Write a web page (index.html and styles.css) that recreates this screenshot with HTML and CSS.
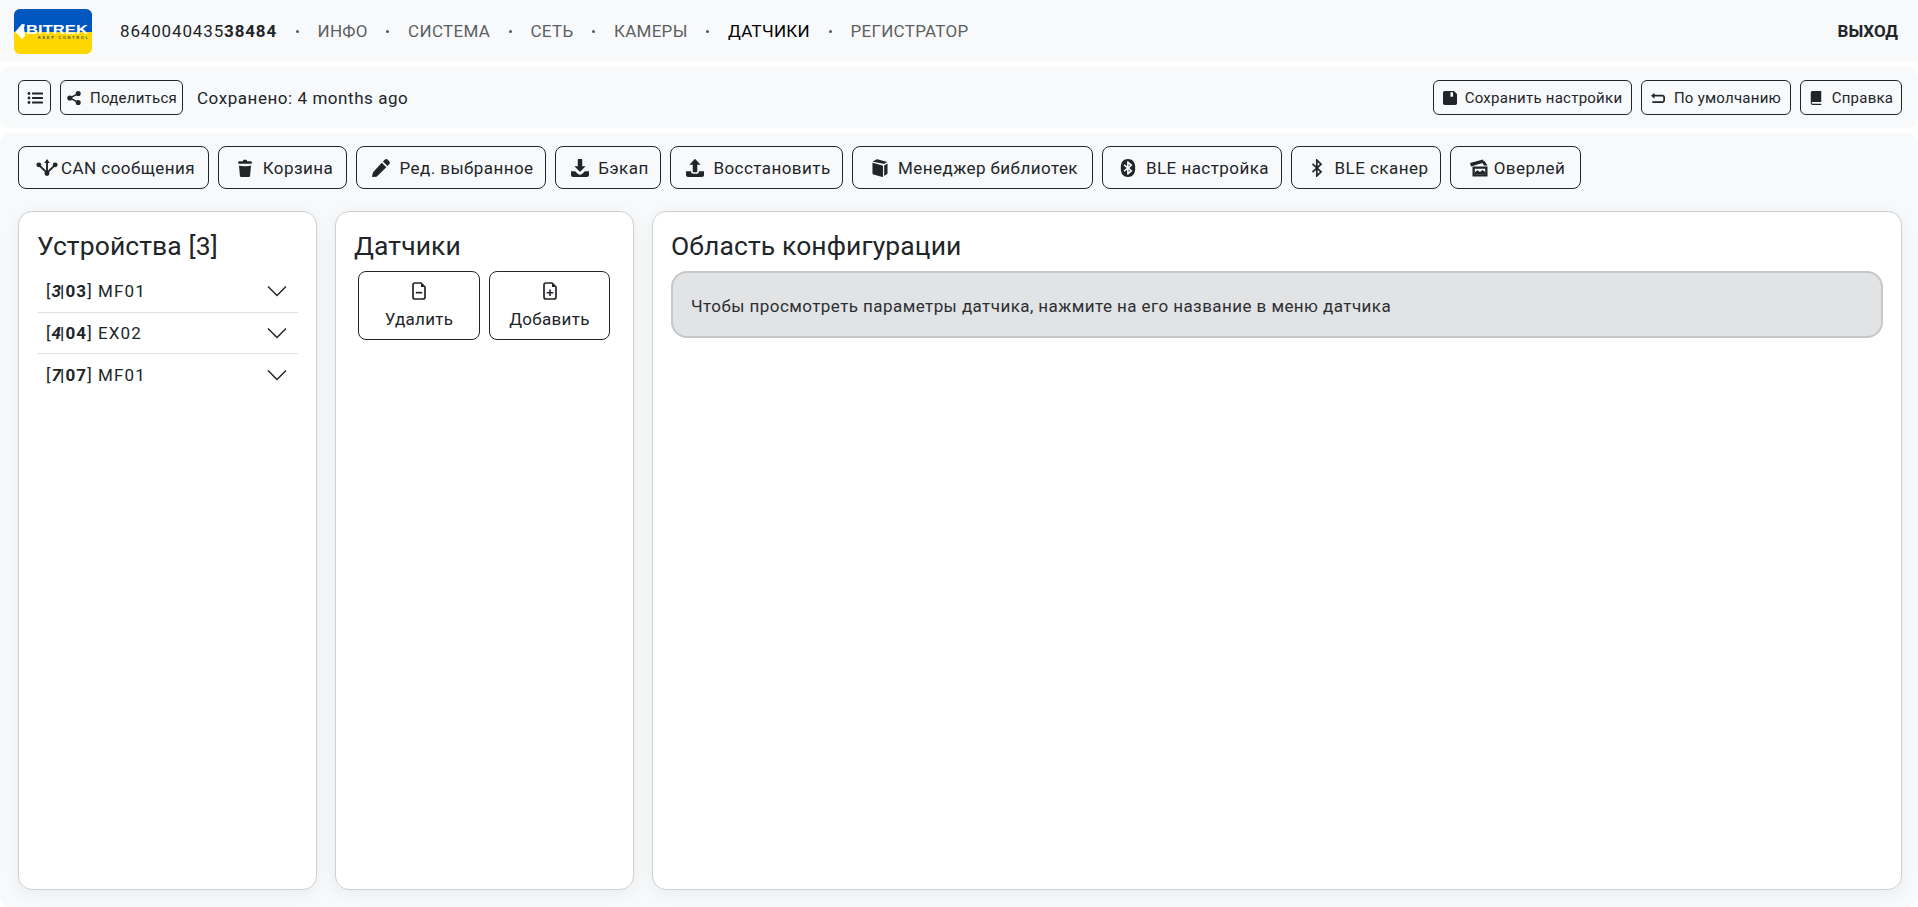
FILE: index.html
```html
<!DOCTYPE html>
<html lang="en">
<head>
  <meta charset="UTF-8">
  <meta name="viewport" content="width=device-width, initial-scale=1.0">
  <title>Датчики</title>
  <link rel="stylesheet" href="styles.css">
</head>
<body>
  <svg class="sprite" xmlns="http://www.w3.org/2000/svg">
    <symbol id="i-list" viewBox="0 0 16 16">
      <circle cx="2" cy="3.500" r="1.400"/><circle cx="2" cy="8" r="1.400"/><circle cx="2" cy="12.500" r="1.400"/>
      <rect x="5" y="2.500" width="11" height="2" rx=".6"/><rect x="5" y="7" width="11" height="2" rx=".6"/><rect x="5" y="11.500" width="11" height="2" rx=".6"/>
    </symbol>
    <symbol id="i-share" viewBox="0 0 16 16">
      <circle cx="12.800" cy="2.900" r="2.900"/><circle cx="3.200" cy="8" r="2.900"/><circle cx="12.800" cy="13.100" r="2.900"/>
      <path d="M12.800 2.900 3.200 8l9.600 5.100" fill="none" stroke="currentColor" stroke-width="1.700"/>
    </symbol>
    <symbol id="i-fork" viewBox="0 0 20 16">
      <circle cx="10" cy="13.700" r="2.300"/><circle cx="2.300" cy="5.500" r="2.300"/><circle cx="17.700" cy="5.500" r="2.300"/>
      <path d="M10 0 7.400 3.800h5.200z"/>
      <path d="M10 3v11M2.300 5.500l7.700 7.500 7.700-7.500" fill="none" stroke="currentColor" stroke-width="1.800"/>
    </symbol>
    <symbol id="i-trash" viewBox="0 0 16 18">
      <path d="M2.200 2.300h3.600L6.500.8h3l.7 1.500h3.600c.6 0 1 .5 1 1v1c0 .3-.2.5-.5.5H1.700c-.3 0-.5-.2-.5-.5v-1c0-.5.400-1 1-1z"/>
      <path d="M2 6.600c2 1 10 1 12 0l-.9 9.800c-.1.9-.8 1.600-1.700 1.600H4.600c-.9 0-1.600-.7-1.700-1.600z"/>
    </symbol>
    <symbol id="i-pencil" viewBox="0 0 16 16">
      <path d="M11.300.7c.8-.8 2-.8 2.800 0l1.200 1.200c.8.8.8 2 0 2.800l-1.600 1.600-4-4zM8.700 3.300l4 4-7.900 7.900c-.3.300-.6.500-1 .6L.6 16c-.4 0-.7-.3-.6-.7l.9-3.300c.1-.4.300-.7.6-1z"/>
    </symbol>
    <symbol id="i-download" viewBox="0 0 16 16">
      <path d="M6.700 0h2.600c.4 0 .7.300.7.700v5.800h3L8.400 11.200c-.2.200-.6.200-.8 0L3 6.500h3V.7c0-.4.300-.7.700-.7z"/>
      <path d="M0 10.800h3.600l2.400 2.400c1.100 1.100 2.900 1.100 4 0l2.400-2.400H16v3.400c0 1-.8 1.800-1.800 1.800H1.800C.8 16 0 15.200 0 14.200z"/>
    </symbol>
    <symbol id="i-upload" viewBox="0 0 16 16">
      <path d="M7.600.2c.2-.2.600-.2.800 0L13 5h-3v6c0 .4-.3.7-.7.700H6.700C6.300 11.700 6 11.400 6 11V5H3z"/>
      <path d="M0 10.800h4.500v.6c0 1 .8 1.800 1.800 1.800h3.400c1 0 1.800-.8 1.800-1.800v-.6H16v3.400c0 1-.8 1.800-1.800 1.800H1.800C.8 16 0 15.200 0 14.200z"/>
    </symbol>
    <symbol id="i-book3d" viewBox="0 0 16 16">
      <path d="M1.500 2.200 4.800.4c.3-.2.600-.2.900-.1l8.800 2.300-2.600 1.600c-.3.200-.6.200-.9.100L2 2.500c-.2 0-.4-.2-.5-.3z"/>
      <path d="M1.300 3.300l8.900 2.500c.3.100.5.300.5.600v9.100c0 .3-.3.500-.6.400l-8-2.200c-.5-.1-.8-.5-.8-1z"/>
      <path d="M11.700 5.700l3-1.800v8.700c0 .3-.1.500-.4.700l-2.600 1.700z"/>
    </symbol>
    <symbol id="i-bt-fill" viewBox="0 0 16 20">
      <path fill-rule="evenodd" d="M8 0c5 0 8 3 8 10s-3 10-8 10-8-3-8-10S3 0 8 0zM7 2.500v5.600L4.300 5.700 3 7l3.500 3L3 13l1.300 1.300L7 11.900v5.600h1l5-4.300L9.500 10 13 6.800 8 2.500zm1.700 3.200 1.700 1.200-1.700 1.500zm0 5.900 1.700 1.500-1.700 1.200z"/>
    </symbol>
    <symbol id="i-bt" viewBox="0 0 12 20">
      <path d="M1 5.500 10.500 14.300 5.800 18.800V1.200L10.500 5.700 1 14.500" fill="none" stroke="currentColor" stroke-width="1.900"/>
    </symbol>
    <symbol id="i-overlay" viewBox="0 0 18 17">
      <path d="M0 3.500 13 0l1 3L1 7z"/>
      <path fill-rule="evenodd" d="M2.500 7h15v10h-15zM4.800 9.300v5.400h10.400V9.300z"/>
      <path d="M4.800 14.700v-2l2.700-2 2.500 1.800 2.500-2 2.700 2v2.200z"/>
      <path d="M14.500 1.500l3 4.500h-3.500l-2-3z"/>
    </symbol>
    <symbol id="i-save" viewBox="0 0 16 16">
      <path fill-rule="evenodd" d="M2 0h10.500L16 3.500V14c0 1.100-.9 2-2 2H2c-1.100 0-2-.9-2-2V2C0 .9.900 0 2 0zM8.500 1.500v5h3v-5z"/>
    </symbol>
    <symbol id="i-back" viewBox="0 0 16 12">
      <path d="M0 3.500 4 0v2.300h9c1.700 0 3 1.300 3 3v3.400c0 1.700-1.300 3-3 3H1.500V9.700H13c.6 0 1-.4 1-1V5.300c0-.6-.4-1-1-1H4v2.500z"/>
    </symbol>
    <symbol id="i-book" viewBox="0 0 12 16">
      <path d="M2 0h10v12.500H2.200c-.7 0-1.200.4-1.200 1s.5 1 1.200 1H12V16H2c-1.100 0-2-1-2-2.200V2C0 .9.900 0 2 0z"/>
    </symbol>
    <symbol id="i-file-minus" viewBox="0 0 14 18">
      <path d="M3 1h6l4 4v10c0 1.100-.9 2-2 2H3c-1.100 0-2-.9-2-2V3c0-1.100.9-2 2-2z" fill="none" stroke="currentColor" stroke-width="1.700"/>
      <path d="M9 1v4h4z"/>
      <rect x="3.800" y="9.800" width="6.400" height="1.700"/>
    </symbol>
    <symbol id="i-file-plus" viewBox="0 0 14 18">
      <path d="M3 1h6l4 4v10c0 1.100-.9 2-2 2H3c-1.100 0-2-.9-2-2V3c0-1.100.9-2 2-2z" fill="none" stroke="currentColor" stroke-width="1.700"/>
      <path d="M9 1v4h4z"/>
      <path d="M6.200 7.500h1.600v2.500h2.500v1.600H7.800v2.500H6.200v-2.500H3.700V10h2.500z"/>
    </symbol>
    <symbol id="i-chevron" viewBox="0 0 20 12">
      <path d="M1 1.500 10 10.500 19 1.500" fill="none" stroke="currentColor" stroke-width="1.500"/>
    </symbol>
  </svg>

  <header class="navbar">
    <svg class="logo" viewBox="0 0 78 45" xmlns="http://www.w3.org/2000/svg">
      <rect width="78" height="45" rx="6" fill="#ffd600"/>
      <path d="M0 23V6a6 6 0 0 1 6-6h66a6 6 0 0 1 6 6v17z" fill="#0057c0"/>
      <path d="M1 23 8 15l3 .5-1 3 1 8-3 4-3-4z" fill="#fff"/>
      <text x="12" y="25" class="logo-name" textLength="62" lengthAdjust="spacingAndGlyphs">BITREK</text>
      <text x="24" y="29.500" class="logo-tag" textLength="50" lengthAdjust="spacing">KEEP CONTROL</text>
    </svg>
    <nav class="nav-links">
      <span class="imei">8640040435<b>38484</b></span>
      <span class="dot"></span><a class="nav-link">ИНФО</a>
      <span class="dot"></span><a class="nav-link">СИСТЕМА</a>
      <span class="dot"></span><a class="nav-link">СЕТЬ</a>
      <span class="dot"></span><a class="nav-link">КАМЕРЫ</a>
      <span class="dot"></span><a class="nav-link active">ДАТЧИКИ</a>
      <span class="dot"></span><a class="nav-link">РЕГИСТРАТОР</a>
    </nav>
    <a class="logout">ВЫХОД</a>
  </header>

  <div class="toolbar">
    <button class="btn btn-sm btn-menu"><svg class="icon"><use href="#i-list"/></svg></button>
    <button class="btn btn-sm btn-share"><svg class="icon"><use href="#i-share"/></svg>Поделиться</button>
    <span class="saved">Сохранено: 4 months ago</span>
    <div class="toolbar-right">
      <button class="btn btn-sm btn-save"><svg class="icon"><use href="#i-save"/></svg>Сохранить настройки</button>
      <button class="btn btn-sm btn-default"><svg class="icon"><use href="#i-back"/></svg>По умолчанию</button>
      <button class="btn btn-sm btn-help"><svg class="icon"><use href="#i-book"/></svg>Справка</button>
    </div>
  </div>

  <main class="workspace">
    <div class="actions">
      <button class="btn btn-lg b-can"><svg class="icon icon-fork"><use href="#i-fork"/></svg>CAN сообщения</button>
      <button class="btn btn-lg b-trash"><svg class="icon"><use href="#i-trash"/></svg>Корзина</button>
      <button class="btn btn-lg b-edit"><svg class="icon"><use href="#i-pencil"/></svg>Ред. выбранное</button>
      <button class="btn btn-lg b-backup"><svg class="icon"><use href="#i-download"/></svg>Бэкап</button>
      <button class="btn btn-lg b-restore"><svg class="icon"><use href="#i-upload"/></svg>Восстановить</button>
      <button class="btn btn-lg b-lib"><svg class="icon"><use href="#i-book3d"/></svg>Менеджер библиотек</button>
      <button class="btn btn-lg b-ble"><svg class="icon"><use href="#i-bt-fill"/></svg>BLE настройка</button>
      <button class="btn btn-lg b-scan"><svg class="icon"><use href="#i-bt"/></svg>BLE сканер</button>
      <button class="btn btn-lg b-over"><svg class="icon"><use href="#i-overlay"/></svg>Оверлей</button>
    </div>

    <div class="panels">
      <section class="card card-side">
        <h4>Устройства [3]</h4>
        <div class="device"><span>[<b><i>3</i>|03</b>] MF01</span><svg class="chevron"><use href="#i-chevron"/></svg></div>
        <div class="device"><span>[<b><i>4</i>|04</b>] EX02</span><svg class="chevron"><use href="#i-chevron"/></svg></div>
        <div class="device"><span>[<b><i>7</i>|07</b>] MF01</span><svg class="chevron"><use href="#i-chevron"/></svg></div>
      </section>
      <section class="card card-side">
        <h4>Датчики</h4>
        <div class="sensor-btns">
          <button class="btn btn-stack"><svg class="icon"><use href="#i-file-minus"/></svg>Удалить</button>
          <button class="btn btn-stack"><svg class="icon"><use href="#i-file-plus"/></svg>Добавить</button>
        </div>
      </section>
      <section class="card card-main">
        <h4>Область конфигурации</h4>
        <div class="alert">Чтобы просмотреть параметры датчика, нажмите на его название в меню датчика</div>
      </section>
    </div>
  </main>
</body>
</html>
```

FILE: styles.css
```css
* {
  box-sizing: border-box;
}

html, body {
  height: 100%;
}

body {
  margin: 0;
  display: flex;
  flex-direction: column;
  gap: 5px;
  overflow: hidden;
  background-color: #fff;
  color: #212529;
  font-family: Roboto, "Noto Sans", sans-serif;
  font-size: 17px;
}

.sprite {
  position: absolute;
  width: 0;
  height: 0;
}

.icon {
  width: 18px;
  height: 18px;
  fill: currentColor;
  flex: none;
}

/* top bar */
.navbar {
  display: flex;
  align-items: center;
  height: 62px;
  padding: 0 20px 0 14px;
  background-color: #f8f9fa;
  flex: none;
}

.logo {
  width: 78px;
  height: 45px;
  margin-right: 28px;
  flex: none;
}

.logo-name {
  font-family: "Liberation Sans", sans-serif;
  font-size: 13px;
  font-weight: 700;
  fill: #fff;
}

.logo-tag {
  font-family: "Liberation Sans", sans-serif;
  font-size: 4px;
  font-weight: 700;
  fill: #4a5a40;
}

.nav-links {
  display: flex;
  align-items: center;
  gap: 18.700px;
  letter-spacing: .3px;
}

.imei {
  color: #212529;
  letter-spacing: .85px;
}

.nav-link {
  color: #5c5f62;
}

.nav-link.active {
  color: #000;
}

.dot {
  width: 3px;
  height: 3px;
  border-radius: 50%;
  background-color: #555;
}

.logout {
  margin-left: auto;
  font-weight: 700;
}

/* second bar */
.toolbar {
  display: flex;
  align-items: center;
  gap: 9px;
  height: 61px;
  padding: 0 16px 0 18px;
  border-radius: 10px;
  background-color: #f8f9fa;
  flex: none;
}

.saved {
  margin-left: 5px;
  letter-spacing: .55px;
}

.toolbar-right {
  display: flex;
  gap: 9px;
  margin-left: auto;
}

.btn {
  display: inline-flex;
  align-items: center;
  justify-content: center;
  border: 1px solid #212529;
  background: transparent;
  color: #212529;
  font-family: inherit;
  white-space: nowrap;
  padding: 0;
}

.btn-sm {
  height: 35px;
  gap: 9px;
  border-radius: 6px;
  font-size: 15px;
  letter-spacing: .25px;
}

.btn-sm .icon {
  width: 14px;
  height: 14px;
}

.btn-menu { width: 33px; }
.btn-menu .icon { width: 16px; height: 16px; }
.btn-share { width: 123px; gap: 9px; padding-left: 1px; }
.btn-save { width: 199px; gap: 8px; }
.btn-default { width: 150px; }
.btn-help { width: 102px; }

.btn-lg {
  height: 43px;
  gap: 9px;
  padding-left: 4px;
  border-radius: 8px;
  font-size: 17px;
  letter-spacing: .45px;
}

.b-can { width: 191px; gap: 3px; }
.b-trash { width: 129px; }
.b-edit { width: 190px; }
.b-backup { width: 106px; }
.b-restore { width: 173px; }
.b-lib { width: 241px; }
.b-ble { width: 180px; }
.b-scan { width: 150px; }
.b-over { width: 131px; gap: 6px; }
.icon-fork { width: 22px; height: 17px; }

/* main area */
.workspace {
  flex: 1;
  display: flex;
  flex-direction: column;
  min-height: 0;
  padding: 13px 16px 17px 18px;
  border-radius: 10px;
  background-color: #f8f9fa;
}

.actions {
  display: flex;
  gap: 9px;
  flex: none;
}

.panels {
  flex: 1;
  display: flex;
  gap: 18px;
  min-height: 0;
  margin-top: 22px;
}

.card {
  padding: 18px;
  border: 1px solid #ced0d2;
  border-radius: 14px;
  background-color: #fff;
  box-shadow: 0 4px 16px rgba(0, 0, 0, .06);
}

.card-side {
  width: 299px;
  flex: none;
}

.card-main {
  flex: 1;
  min-width: 0;
}

h4 {
  margin: 0;
  font-size: 26.500px;
  font-weight: 400;
  line-height: 32px;
  letter-spacing: .1px;
  color: #212529;
}

.device {
  display: flex;
  justify-content: space-between;
  align-items: center;
  height: 41.500px;
  padding: 0 11px 0 9px;
  border-bottom: 1px solid #dee2e6;
  letter-spacing: 1.100px;
}

.device:last-child {
  border-bottom: 0;
}

.card-side h4 + .device {
  margin-top: 9px;
}

.device i {
  letter-spacing: -1px;
}

.chevron {
  width: 20px;
  height: 12px;
  fill: #212529;
  color: #212529;
}

.sensor-btns {
  display: flex;
  gap: 9px;
  margin: 9px 0 0 4px;
}

.btn-stack {
  flex-direction: column;
  gap: 9px;
  width: 122px;
  height: 69px;
  border-radius: 8px;
  font-size: 17px;
  letter-spacing: .3px;
}

.btn-stack:last-child {
  width: 121px;
}

.alert {
  display: flex;
  align-items: center;
  height: 67px;
  margin-top: 9px;
  padding: 2px 18px 0;
  border: 2px solid #c6c7c8;
  border-radius: 16px;
  background-color: #e2e3e5;
  color: #2b2f32;
  letter-spacing: .43px;
}
```
